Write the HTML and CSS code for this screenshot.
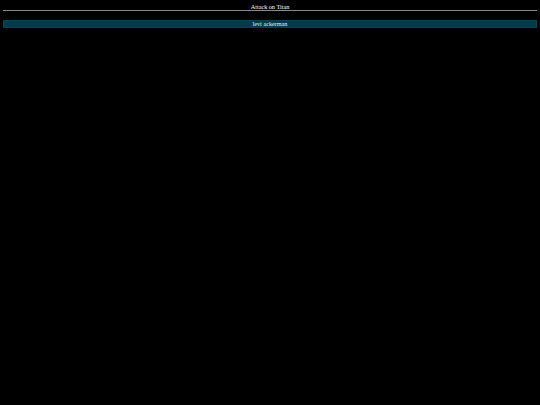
FILE: index.html
```html
<!DOCTYPE html>
<html>
<head>
<meta charset="utf-8">
<link rel="stylesheet" href="styles.css">
</head>
<body>
<div class="title">Attack on Titan</div>
<hr class="rule">
<div class="bar">levi ackerman</div>
</body>
</html>
```
FILE: styles.css
```css
html, body {
  background: #000;
}
body {
  margin: 3px;
  font-family: "Liberation Serif", serif;
  font-size: 6.2px;
  color: #fff;
}
.title {
  text-align: center;
  line-height: 7px;
}
.rule {
  margin: 0 0 9px 0;
  border: none;
  height: 1px;
  background: #8a8a8a;
}
.bar {
  background: #033a4c;
  box-shadow: inset 0 0 0 0.5px #0b4a5e;
  text-align: center;
  line-height: 8px;
  color: #e8eef0;
}
```
